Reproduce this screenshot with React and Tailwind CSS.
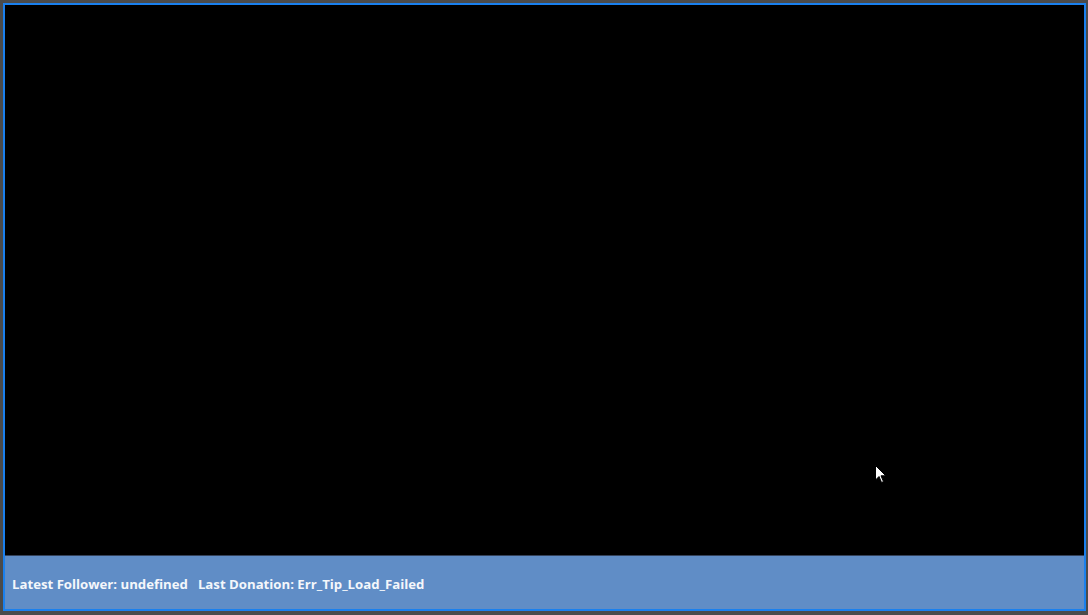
import React from 'react';

const App = () => {
  return (
    <div className="w-[1088px] h-[615px] bg-[#4b4b4b] pt-[3px] pl-[3px] pr-[2px] pb-[4px]">
      <div className="h-full flex flex-col border-2 border-[#1a80ee]">
        {/* Stream preview */}
        <div className="relative flex-1 bg-black">
          <svg
            className="absolute left-[870px] top-[460px]"
            width="12"
            height="19"
            viewBox="0 0 12 19"
          >
            <path d="M0.5 0.5 L0.5 15 L4 11.5 L6.5 17.5 L8.5 16.6 L6 10.8 L10.8 10.8 Z" fill="#ffffff" stroke="#000000" strokeWidth="1" />
          </svg>
        </div>
        <div className="h-px bg-[#34425a]" />
        {/* Footer ticker */}
        <div
          className="h-[53px] bg-[#608dc6] flex items-center pl-[7px] pt-[5px] text-[13.2px] font-bold text-[#f4f7fb]"
          style={{ fontFamily: '"Open Sans", "Noto Sans", sans-serif' }}
        >
          <span>Latest Follower: undefined</span>
          <span className="ml-[10px]">Last Donation: Err_Tip_Load_Failed</span>
        </div>
      </div>
    </div>
  );
};

export default App;
